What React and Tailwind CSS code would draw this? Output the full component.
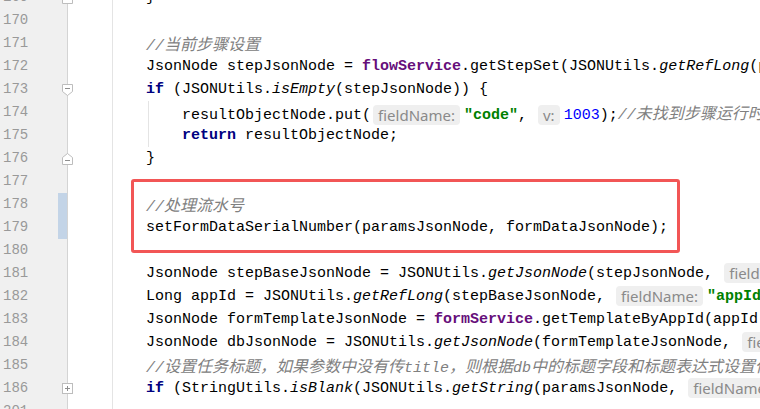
const LINES = [
  { n: 169, fold: 'end', code: [['}', '']] },
  { n: 170 },
  { n: 171, code: [['//当前步骤设置', 'c']] },
  {
    n: 172,
    code: [
      ['JsonNode stepJsonNode = ', ''],
      ['flowService', 'f'],
      ['.getStepSet(JSONUtils.', ''],
      ['getRefLong', 'i'],
      ['(paramsJsonNode, ', ''],
    ],
  },
  {
    n: 173,
    fold: 'start',
    code: [
      ['if', 'k'],
      [' (JSONUtils.', ''],
      ['isEmpty', 'i'],
      ['(stepJsonNode)) {', ''],
    ],
  },
  {
    n: 174,
    code: [
      ['    resultObjectNode.put(', ''],
      ['fieldName:', 'h'],
      ['"code"', 's'],
      [', ', ''],
      ['v:', 'h'],
      ['1003', 'n'],
      [');', ''],
      ['//未找到步骤运行时配置', 'c'],
    ],
  },
  {
    n: 175,
    code: [
      ['    ', ''],
      ['return', 'k'],
      [' resultObjectNode;', ''],
    ],
  },
  { n: 176, fold: 'end', code: [['}', '']] },
  { n: 177 },
  { n: 178, changed: true, code: [['//处理流水号', 'c']] },
  { n: 179, changed: true, code: [['setFormDataSerialNumber(paramsJsonNode, formDataJsonNode);', '']] },
  { n: 180 },
  {
    n: 181,
    code: [
      ['JsonNode stepBaseJsonNode = JSONUtils.', ''],
      ['getJsonNode', 'i'],
      ['(stepJsonNode, ', ''],
      ['fieldName:', 'h'],
    ],
  },
  {
    n: 182,
    code: [
      ['Long appId = JSONUtils.', ''],
      ['getRefLong', 'i'],
      ['(stepBaseJsonNode, ', ''],
      ['fieldName:', 'h'],
      ['"appId"', 's'],
      [');', ''],
    ],
  },
  {
    n: 183,
    code: [
      ['JsonNode formTemplateJsonNode = ', ''],
      ['formService', 'f'],
      ['.getTemplateByAppId(appId);', ''],
    ],
  },
  {
    n: 184,
    code: [
      ['JsonNode dbJsonNode = JSONUtils.', ''],
      ['getJsonNode', 'i'],
      ['(formTemplateJsonNode, ', ''],
      ['fieldName:', 'h'],
    ],
  },
  { n: 185, code: [['//设置任务标题，如果参数中没有传title，则根据db中的标题字段和标题表达式设置任务标题', 'c']] },
  {
    n: 186,
    fold: 'plus',
    code: [
      ['if', 'k'],
      [' (StringUtils.', ''],
      ['isBlank', 'i'],
      ['(JSONUtils.', ''],
      ['getString', 'i'],
      ['(paramsJsonNode, ', ''],
      ['fieldName:', 'h'],
    ],
  },
  { n: 201 },
];

const tokenClass = {
  '': 'text-black',
  k: 'text-[#000080] font-bold',
  f: 'text-[#660e7a] font-bold',
  s: 'text-[#008000] font-bold',
  n: 'text-[#0000ff]',
  i: 'text-black italic',
};

function Comment({ text }) {
  // CJK runs are drawn a bit wider than the mono cells, like the editor's fallback font
  const parts = text.split(/([\u3000-\u9fff\uff00-\uffef]+)/);
  return (
    <span className="text-[#808080] italic">
      {parts.map((p, i) =>
        /[\u3000-\u9fff\uff00-\uffef]/.test(p) ? (
          <span key={i} className="text-[16px] font-['Noto_Sans_CJK_SC',sans-serif]">
            {p}
          </span>
        ) : (
          <span key={i}>{p}</span>
        )
      )}
    </span>
  );
}

function Hint({ text }) {
  return (
    <span className="inline-block align-middle h-[20px] leading-[20px] ml-[2px] mr-[4px] px-[5px] rounded-[4px] bg-[#efefef] text-[#8a8a8a] text-[15px] font-['Noto_Sans',sans-serif] not-italic font-normal">
      {text}
    </span>
  );
}

function FoldIcon({ kind }) {
  if (kind === 'start') {
    return (
      <svg width="11" height="12" viewBox="0 0 11 12" className="absolute left-[62px] top-[6px]">
        <path d="M0.5 0.5H10.5V7.5L5.5 11.5L0.5 7.5Z" fill="#fff" stroke="#bdbdbd" />
        <path d="M3 4.5H8" stroke="#8e8e8e" />
      </svg>
    );
  }
  if (kind === 'end') {
    return (
      <svg width="11" height="12" viewBox="0 0 11 12" className="absolute left-[62px] top-[6px]">
        <path d="M0.5 11.5H10.5V4.5L5.5 0.5L0.5 4.5Z" fill="#fff" stroke="#bdbdbd" />
        <path d="M3 7.5H8" stroke="#8e8e8e" />
      </svg>
    );
  }
  return (
    <svg width="11" height="11" viewBox="0 0 11 11" className="absolute left-[62px] top-[6px]">
      <rect x="0.5" y="0.5" width="10" height="10" fill="#fff" stroke="#bdbdbd" />
      <path d="M3 5.5H8M5.5 3V8" stroke="#8e8e8e" />
    </svg>
  );
}

export default function App() {
  return (
    <div className="relative w-[760px] h-[409px] overflow-hidden bg-white font-['Liberation_Mono',monospace] text-[15px]">
      <div className="flex mt-[-14px]">
        <div className="w-[68px] shrink-0 bg-[#f0f0f0] border-r border-[#d4d4d4]">
          {LINES.map((line) => (
            <div key={line.n} className="relative h-[23px] leading-[23px] pl-[3px] text-[14px] text-[#999999]">
              {line.changed && <div className="absolute right-0 top-0 h-full w-[9px] bg-[#c3d4e7]" />}
              {line.n}
              {line.fold && <FoldIcon kind={line.fold} />}
            </div>
          ))}
        </div>

        <div className="relative flex-1 pl-[78px]">
          <div className="absolute left-[44px] top-0 h-full w-px bg-[#e4e4e4]" />
          <div className="absolute left-[80px] top-[115px] h-[46px] w-px bg-[#e4e4e4]" />
          {LINES.map((line) => (
            <div key={line.n} className="relative h-[23px] leading-[23px] whitespace-pre">
              {(line.code || []).map(([text, type], i) => {
                if (type === 'c') return <Comment key={i} text={text} />;
                if (type === 'h') return <Hint key={i} text={text} />;
                return (
                  <span key={i} className={tokenClass[type]}>
                    {text}
                  </span>
                );
              })}
            </div>
          ))}
        </div>
      </div>

      <div className="absolute left-[131px] top-[179px] w-[549px] h-[74px] border-[3px] border-[#f25656] rounded-[3px]" />
    </div>
  );
}
